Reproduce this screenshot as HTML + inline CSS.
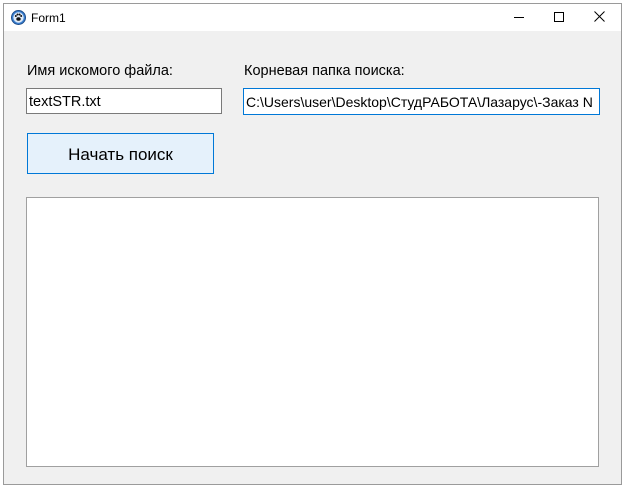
<!DOCTYPE html>
<html><head><meta charset="utf-8"><style>
*{margin:0;padding:0;box-sizing:border-box}
body{width:624px;height:489px;background:#fff;position:relative;overflow:hidden;font-family:"Liberation Sans",sans-serif;font-size:14px;color:#000}
.win{position:absolute;left:3px;top:3px;width:619px;height:482px;border:1px solid #9a9a9a;background:#f0f0f0}
.title{position:absolute;left:0;top:0;width:100%;height:27px;background:#fff}
.abs{position:absolute}
.edit{position:absolute;background:#fff;border:1px solid #7a7a7a;white-space:nowrap;overflow:hidden;padding:5px 0 0 2px;font-size:14.5px}
</style></head><body>
<div class="win">
<div class="title">
 <svg class="abs" style="left:7px;top:6px" width="15" height="15" viewBox="0 0 15 15"><circle cx="7.5" cy="7.5" r="7" fill="#3a7fd0" stroke="#1d4d8a"/><circle cx="7.5" cy="7.5" r="5.2" fill="#dfeaf7"/><ellipse cx="7.5" cy="9" rx="2.2" ry="1.8" fill="#111"/><circle cx="4.8" cy="6" r="1" fill="#111"/><circle cx="6.5" cy="4.5" r="1" fill="#111"/><circle cx="8.6" cy="4.5" r="1" fill="#111"/><circle cx="10.2" cy="6" r="1" fill="#111"/></svg>
 <div class="abs" style="left:27px;top:7px;font-size:12px">Form1</div>
 <div class="abs" style="left:510px;top:13px;width:10px;height:1px;background:#000"></div>
 <div class="abs" style="left:550px;top:8px;width:10px;height:10px;border:1px solid #000"></div>
 <svg class="abs" style="left:590px;top:7px" width="11" height="11"><path d="M0.5 0.5L10.5 10.5M10.5 0.5L0.5 10.5" stroke="#000" stroke-width="1"/></svg>
</div>
</div>
<div class="abs" style="left:27px;top:63px;font-size:14.5px">Имя искомого файла:</div>
<div class="abs" style="left:244px;top:63px;font-size:14.5px">Корневая папка поиска:</div>
<div class="edit" style="left:26px;top:88px;width:196px;height:26px">textSTR.txt</div>
<div class="edit" style="left:243px;top:88px;width:357px;height:27px;border-color:#0078d7;font-size:14px">C:\Users\user\Desktop\СтудРАБОТА\Лазарус\-Заказ N</div>
<div class="abs" style="left:27px;top:133px;width:187px;height:41px;background:#e5f1fb;border:1px solid #0078d7;text-align:center;line-height:41px;font-size:17px">Начать поиск</div>
<div class="abs" style="left:26px;top:197px;width:573px;height:270px;background:#fff;border:1px solid #a0a0a0"></div>
</body></html>
